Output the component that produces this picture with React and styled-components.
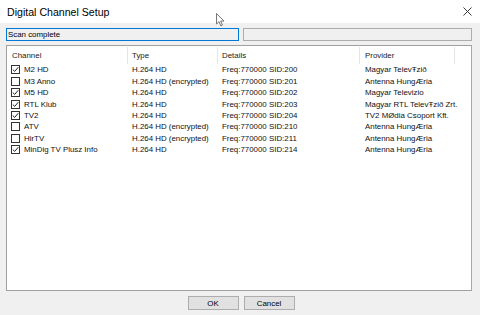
import React from 'react';
import styled, { createGlobalStyle } from 'styled-components';

const GlobalStyle = createGlobalStyle`
    html, body {
        margin: 0;
        padding: 0;
        background: #f0f0f0;
    }
    body {
        font-family: "Liberation Sans", Arial, sans-serif;
    }
`;

const channels = [
    { name: 'M2 HD', type: 'H.264 HD', sid: 200, provider: 'Magyar TelevŦzið', checked: true },
    { name: 'M3 Anno', type: 'H.264 HD (encrypted)', sid: 201, provider: 'Antenna HungÆria', checked: false },
    { name: 'M5 HD', type: 'H.264 HD', sid: 202, provider: 'Magyar Televizio', checked: true },
    { name: 'RTL Klub', type: 'H.264 HD', sid: 203, provider: 'Magyar RTL TelevŦzið Zrt.', checked: true },
    { name: 'TV2', type: 'H.264 HD', sid: 204, provider: 'TV2 MØdia Csoport Kft.', checked: true },
    { name: 'ATV', type: 'H.264 HD (encrypted)', sid: 210, provider: 'Antenna HungÆria', checked: false },
    { name: 'HirTV', type: 'H.264 HD (encrypted)', sid: 211, provider: 'Antenna HungÆria', checked: false },
    { name: 'MinDig TV Plusz Info', type: 'H.264 HD', sid: 214, provider: 'Antenna HungÆria', checked: true }
];

const columns = '121px 90px 142px 95px 1fr';

const Window = styled.div`
    position: relative;
    width: 480px;
    height: 315px;
    display: flex;
    flex-direction: column;
    background: #f0f0f0;
    color: #000;
    overflow: hidden;
`;

const TitleBar = styled.div`
    height: 23px;
    flex: none;
    background: #fff;
    display: flex;
    align-items: center;
    justify-content: space-between;
    padding: 0 8px 0 7px;
    font-size: 10.6px;
    color: #000;
`;

const CloseButton = styled.svg`
    width: 9px;
    height: 9px;
    display: block;
`;

const Body = styled.div`
    flex: 1;
    display: flex;
    flex-direction: column;
    padding: 5px 8px 5px 6px;
    gap: 4px;
`;

const StatusRow = styled.div`
    display: grid;
    grid-template-columns: 233px 1fr;
    gap: 4px;
    height: 13px;
`;

const StatusBox = styled.div`
    border: 1px solid ${props => (props.focused ? '#0078d7' : '#adadad')};
    background: #f0f0f0;
    font-size: 7.9px;
    line-height: 11px;
    padding: 0 1px;
    white-space: nowrap;
`;

const ListView = styled.div`
    flex: 1;
    background: #fff;
    border: 1px solid #a0a0a0;
    border-right-color: #a8a8a8;
    display: flex;
    flex-direction: column;
    font-size: 7.9px;
    color: #111;
`;

const HeaderRow = styled.div`
    display: grid;
    grid-template-columns: ${columns};
    height: 18px;
    flex: none;
    align-items: stretch;
`;

const HeaderCell = styled.div`
    display: flex;
    align-items: center;
    padding-left: ${props => props.pad || 4}px;
    border-right: ${props => (props.last ? 'none' : '1px solid #e5e5e5')};
    margin: 1px 0 0;
    color: #222;
`;

const Row = styled.div`
    display: grid;
    grid-template-columns: ${columns};
    height: 11.45px;
    align-items: center;
    white-space: nowrap;
`;

const Cell = styled.div`
    padding-left: ${props => props.pad || 4}px;
    display: flex;
    align-items: center;
`;

const CheckBox = styled.span`
    width: 7px;
    height: 7px;
    flex: none;
    border: 1px solid #333;
    margin: 0 4px 0 0;
    display: flex;
    align-items: center;
    justify-content: center;
    background: #fff;
`;

const ButtonRow = styled.div`
    display: flex;
    justify-content: center;
    gap: 5px;
    padding: 1px 0 0 4px;
`;

const Button = styled.button`
    width: 51px;
    height: 14px;
    padding: 0;
    border: 1px solid #adadad;
    background: #e1e1e1;
    font-family: "Liberation Sans", Arial, sans-serif;
    font-size: 7.9px;
    color: #000;
`;

const Cursor = styled.svg`
    position: absolute;
    left: 216px;
    top: 13px;
    width: 10px;
    height: 14px;
`;

const Tick = () => (
    <svg width="7" height="7" viewBox="0 0 7 7">
        <path d="M0.8 3.6 L2.7 5.4 L6.3 1.2" fill="none" stroke="#222" strokeWidth="1" />
    </svg>
);

const ChannelRow = ({ channel }) => (
    <Row>
        <Cell>
            <CheckBox>{channel.checked && <Tick />}</CheckBox>
            {channel.name}
        </Cell>
        <Cell>{channel.type}</Cell>
        <Cell>Freq:770000 SID:{channel.sid}</Cell>
        <Cell pad={5}>{channel.provider}</Cell>
        <Cell />
    </Row>
);

const App = () => {
    return (
        <Window>
            <GlobalStyle />
            <TitleBar>
                <span>Digital Channel Setup</span>
                <CloseButton viewBox="0 0 9 9">
                    <path d="M0.5 0.5 L8.5 8.5 M8.5 0.5 L0.5 8.5" stroke="#222" strokeWidth="0.9" fill="none" />
                </CloseButton>
            </TitleBar>
            <Body>
                <StatusRow>
                    <StatusBox focused>Scan complete</StatusBox>
                    <StatusBox />
                </StatusRow>
                <ListView>
                    <HeaderRow>
                        <HeaderCell pad={5}>Channel</HeaderCell>
                        <HeaderCell>Type</HeaderCell>
                        <HeaderCell>Details</HeaderCell>
                        <HeaderCell pad={5}>Provider</HeaderCell>
                        <HeaderCell last />
                    </HeaderRow>
                    {channels.map(channel => (
                        <ChannelRow key={channel.sid} channel={channel} />
                    ))}
                </ListView>
                <ButtonRow>
                    <Button>OK</Button>
                    <Button>Cancel</Button>
                </ButtonRow>
            </Body>
            <Cursor viewBox="0 0 10 14">
                <path d="M0.5 0.5 L0.5 11 L3 8.6 L4.8 12.8 L6.4 12.1 L4.7 8.1 L8 8.1 Z" fill="#fff" stroke="#555" strokeWidth="0.8" />
            </Cursor>
        </Window>
    );
};

export default App;
